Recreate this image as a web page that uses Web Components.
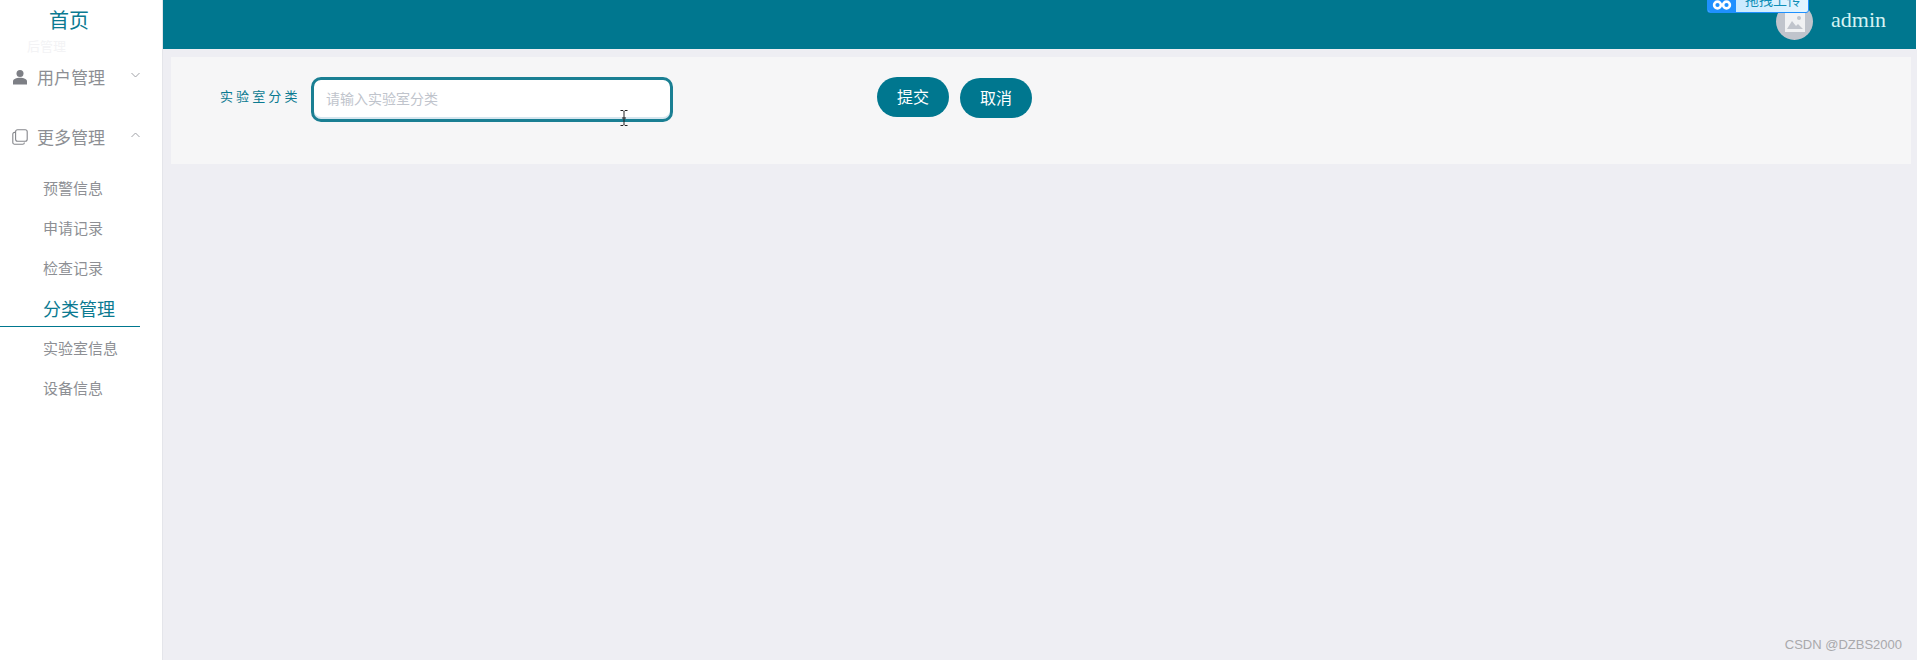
<!DOCTYPE html>
<html lang="zh">
<head>
<meta charset="utf-8">
<title>分类管理</title>
<style>
  html, body { margin: 0; height: 100%; overflow: hidden; }
  body { font-family: "Noto Sans CJK SC", sans-serif; }
</style>
</head>
<body>
<admin-shell>
  <side-nav slot="side">
    <nav-group label="用户管理" icon="user"></nav-group>
    <nav-group label="更多管理" icon="copy" open>
      <nav-item>预警信息</nav-item>
      <nav-item>申请记录</nav-item>
      <nav-item>检查记录</nav-item>
      <nav-item active>分类管理</nav-item>
      <nav-item>实验室信息</nav-item>
      <nav-item>设备信息</nav-item>
    </nav-group>
  </side-nav>
  <top-bar slot="top" user="admin"></top-bar>
  <form-panel>
    <text-field label="实验室分类" placeholder="请输入实验室分类"></text-field>
    <pill-button>提交</pill-button>
    <pill-button drop>取消</pill-button>
  </form-panel>
</admin-shell>

<script>
/** Shell */
class AdminShell extends HTMLElement {
  constructor() {
    super();
    this.attachShadow({ mode: "open" }).innerHTML = `
<style>
  :host { display: grid; grid-template-columns: 162px 1fr; height: 660px; position: relative; background: #eeeef3; }
  .main { display: flex; flex-direction: column; min-width: 0; border-left: 1px solid #e4e5ea; }
  .body { flex: 1; padding: 8px 6px 0 8px; }
  .mark { position: absolute; right: 15px; bottom: 7px; font: 13px/16px "Liberation Sans", sans-serif; color: #a9a9ac; }
</style>
<slot name="side"></slot>
<div class="main">
  <slot name="top"></slot>
  <div class="body"><slot></slot></div>
</div>
<span class="mark">CSDN @DZBS2000</span>`;
  }
}

/** Sidebar */
class SideNav extends HTMLElement {
  constructor() {
    super();
    this.attachShadow({ mode: "open" }).innerHTML = `
<style>
  :host { display: block; background: #fff; position: relative; }
  .home { height: 40px; margin-bottom: 6px; text-align: center; font-size: 20px; line-height: 40px; color: #0b7a91; padding-right: 24px; }
  .ghost { position: absolute; left: 27px; top: 38px; font-size: 13px; line-height: 16px; color: #f3f3f5; }
</style>
<div class="home">首页</div>
<span class="ghost">后管理</span>
<slot></slot>`;
  }
}

const ICONS = {
  user: `<svg width="16" height="16" viewBox="0 0 16 16"><circle cx="8" cy="4.4" r="3.5" fill="#7d7f85"/><path d="M1 15.5v-3C1 10 4.4 8.8 8 8.8s7 1.2 7 3.7v3z" fill="#7d7f85"/></svg>`,
  copy: `<svg width="16" height="16" viewBox="0 0 16 16" fill="none" stroke="#85878c" stroke-width="1.1"><rect x="3.6" y="0.8" width="11.6" height="11.4" rx="2"/><path d="M3.4 3.4H2.6A1.8 1.8 0 0 0 .8 5.2v8.2A1.8 1.8 0 0 0 2.6 15.2h8a1.8 1.8 0 0 0 1.8-1.8"/></svg>`
};

class NavGroup extends HTMLElement {
  constructor() {
    super();
    this.attachShadow({ mode: "open" });
  }
  connectedCallback() {
    const open = this.hasAttribute("open");
    this.shadowRoot.innerHTML = `
<style>
  :host { display: block; }
  .head { height: 60px; display: flex; align-items: center; padding-left: 12px; font-size: 17px; color: #8d8f94; }
  .head svg.ic { margin: 2px 9px 0 0; flex: none; }
  .head span { width: 94px; }
  .arrow { width: 9px; height: 6px; margin: 0 0 3px 0; }
  ::slotted(nav-item:first-child) { margin-top: 2px; }
</style>
<div class="head">
  ${ICONS[this.getAttribute("icon")].replace("<svg", '<svg class="ic"')}
  <span>${this.getAttribute("label")}</span>
  <svg class="arrow" viewBox="0 0 9 6" fill="none" stroke="#a0a2a7" stroke-width="1"><path d="${open ? "M.5 5L4.5 1L8.5 5" : "M.5 1L4.5 5L8.5 1"}"/></svg>
</div>
<div class="list"><slot></slot></div>`;
  }
}

class NavItem extends HTMLElement {
  constructor() {
    super();
    this.attachShadow({ mode: "open" }).innerHTML = `
<style>
  :host { display: block; height: 40px; line-height: 40px; padding-left: 43px; font-size: 15px; color: #8d8f94; width: 97px; }
  :host([active]) { font-size: 18px; color: #0b7a91; border-bottom: 1px solid #00778f; height: 36px; line-height: 36px; padding-top: 2px; margin-bottom: 1px; }
</style>
<slot></slot>`;
  }
}

/** Header */
class TopBar extends HTMLElement {
  constructor() {
    super();
    this.attachShadow({ mode: "open" });
  }
  connectedCallback() {
    this.shadowRoot.innerHTML = `
<style>
  :host { display: flex; align-items: center; justify-content: flex-end; height: 49px; background: #00778f; position: relative; padding-right: 31px; }
  .avatar { width: 37px; height: 37px; border-radius: 50%; background: #c0c4cc; display: flex; align-items: center; justify-content: center; margin: 0 18px 6px 0; }
  .name { font: 22px/24px "Liberation Serif", serif; color: #d6f3f3; margin-bottom: 9px; }
  .edge { position: absolute; right: 0; top: 0; bottom: 0; width: 1px; background: #fff; }
  .upload { position: absolute; top: -13px; right: 108px; width: 102px; height: 26px; box-sizing: border-box; display: flex; overflow: hidden; border: 1px solid #1e90ff; border-radius: 0 0 3px 3px; background: linear-gradient(90deg, #bfe6ff, #e4f5ff); }
  .upload b { width: 28px; background: #1e90ff; display: flex; align-items: flex-end; justify-content: center; padding-bottom: 2px; box-sizing: border-box; }
  .upload span { font-size: 14px; line-height: 22px; color: #0f8fb8; padding: 0 0 0 9px; }
</style>
<div class="upload">
  <b><svg width="20" height="10" viewBox="0 0 20 10" fill="none" stroke="#fff" stroke-width="2.6"><circle cx="5.5" cy="5" r="3.4"/><circle cx="14.5" cy="5" r="3.4"/></svg></b>
  <span>拖拽上传</span>
</div>
<div class="avatar"><svg width="20" height="20" viewBox="0 0 20 20"><path d="M0 0h20v20H0z" fill="#f0f1f3"/><circle cx="14" cy="6" r="2" fill="#c0c4cc"/><path d="M2 17l5-8 4 5 2-2 5 5z" fill="#c0c4cc"/></svg></div>
<span class="name">${this.getAttribute("user")}</span>
<span class="edge"></span>`;
  }
}

/** Form */
class FormPanel extends HTMLElement {
  constructor() {
    super();
    this.attachShadow({ mode: "open" }).innerHTML = `
<style>
  :host { display: flex; align-items: flex-start; height: 107px; box-sizing: border-box; background: #f6f6f7; padding: 20px 0 0 49px; }
  ::slotted(text-field) { margin-right: 204px; }
  ::slotted(pill-button) { margin-right: 11px; }
</style>
<slot></slot>`;
  }
}

class TextField extends HTMLElement {
  constructor() {
    super();
    this.attachShadow({ mode: "open" });
  }
  connectedCallback() {
    this.shadowRoot.innerHTML = `
<style>
  :host { display: flex; align-items: flex-start; position: relative; }
  label { width: 91px; font-size: 13px; letter-spacing: 3.1px; color: #0b7a91; line-height: 38px; white-space: nowrap; }
  input { width: 362px; height: 45px; box-sizing: border-box; border: 3px solid #1a7f93; border-radius: 10px; background: #fff; padding: 0 12px 3px; font: 14px "Noto Sans CJK SC", sans-serif; outline: none; box-shadow: inset 0 -2px 0 #d5e6ef; }
  input::placeholder { color: #c0c4cc; opacity: 1; }
  svg { position: absolute; left: 400px; top: 33px; }
</style>
<label>${this.getAttribute("label")}</label>
<input placeholder="${this.getAttribute("placeholder")}">
<svg width="8" height="16" viewBox="0 0 8 16" fill="none" stroke="#222" stroke-width="1"><path d="M0.5 .5h2.5l1 1 1-1h2.5M4 1.5v13M0.5 15.5h2.5l1-1 1 1h2.5M2 8h4"/></svg>`;
  }
}

class PillButton extends HTMLElement {
  constructor() {
    super();
    this.attachShadow({ mode: "open" }).innerHTML = `
<style>
  :host { display: flex; align-items: center; justify-content: center; width: 72px; height: 40px; box-sizing: border-box; padding-bottom: 2px; border-radius: 20px; background: #00778f; color: #fff; font-size: 16px; }
  :host([drop]) { margin-top: 1px; }
</style>
<slot></slot>`;
  }
}

customElements.define("admin-shell", AdminShell);
customElements.define("side-nav", SideNav);
customElements.define("nav-group", NavGroup);
customElements.define("nav-item", NavItem);
customElements.define("top-bar", TopBar);
customElements.define("form-panel", FormPanel);
customElements.define("text-field", TextField);
customElements.define("pill-button", PillButton);
</script>
</body>
</html>
